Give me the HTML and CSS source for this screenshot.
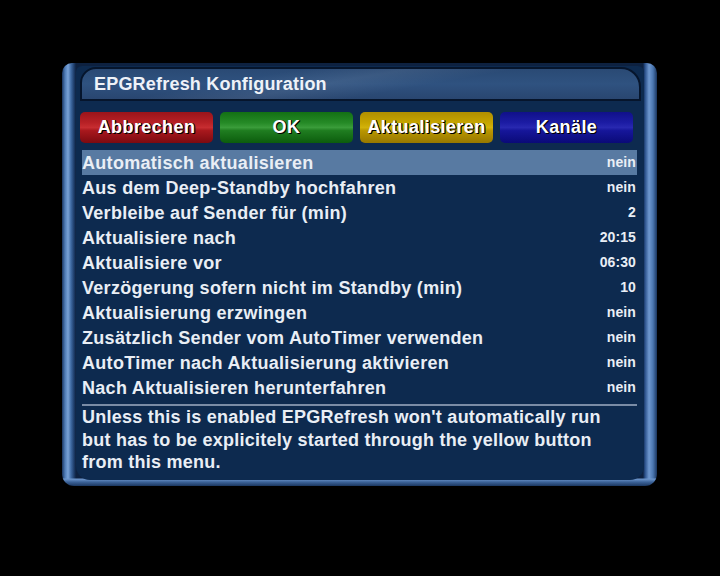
FILE: index.html
```html
<!DOCTYPE html>
<html lang="de">
<head>
<meta charset="utf-8">
<title>EPGRefresh Konfiguration</title>
<link rel="stylesheet" href="styles.css">
</head>
<body>
<div class="frame">
  <div class="panel">
    <div class="titlebar">EPGRefresh Konfiguration</div>
    <div class="buttons">
      <div class="btn btn-red">Abbrechen</div>
      <div class="btn btn-green">OK</div>
      <div class="btn btn-yellow">Aktualisieren</div>
      <div class="btn btn-blue">Kanäle</div>
    </div>
    <div class="list">
      <div class="row selected"><span class="label">Automatisch aktualisieren</span><span class="value">nein</span></div>
      <div class="row"><span class="label">Aus dem Deep-Standby hochfahren</span><span class="value">nein</span></div>
      <div class="row"><span class="label">Verbleibe auf Sender für (min)</span><span class="value">2</span></div>
      <div class="row"><span class="label">Aktualisiere nach</span><span class="value">20:15</span></div>
      <div class="row"><span class="label">Aktualisiere vor</span><span class="value">06:30</span></div>
      <div class="row"><span class="label">Verzögerung sofern nicht im Standby (min)</span><span class="value">10</span></div>
      <div class="row"><span class="label">Aktualisierung erzwingen</span><span class="value">nein</span></div>
      <div class="row"><span class="label">Zusätzlich Sender vom AutoTimer verwenden</span><span class="value">nein</span></div>
      <div class="row"><span class="label">AutoTimer nach Aktualisierung aktivieren</span><span class="value">nein</span></div>
      <div class="row"><span class="label">Nach Aktualisieren herunterfahren</span><span class="value">nein</span></div>
    </div>
    <div class="separator"></div>
    <div class="description">Unless this is enabled EPGRefresh won't automatically run but has to be explicitely started through the yellow button from this menu.</div>
  </div>
</div>
</body>
</html>
```
FILE: styles.css
```css
html, body {
  margin: 0;
  padding: 0;
  background: #000;
  width: 720px;
  height: 576px;
  overflow: hidden;
  font-family: "Liberation Sans", Arial, sans-serif;
  font-weight: bold;
  color: #e9eef5;
}

.frame {
  margin: 63px 0 0 62px;
  width: 595px;
  height: 423px;
  box-sizing: border-box;
  padding: 3px 13px 6px 14px;
  border-radius: 10px 10px 12px 12px;
  background:
    linear-gradient(180deg, rgba(0,0,0,0) 0, rgba(0,0,0,0) 415px, #6d96cc 416px, #3c6399 419px, #1b3760 423px),
    linear-gradient(90deg, #1a3560 0, #4e7bb6 3px, #7aa3d8 6px, #3f6aa3 9px, #1e3d6a 12px, #0d2140 14px, #0d2140 581px, #2a508a 583px, #6f98cf 587px, #4a76b0 591px, #1a355e 595px);
}

.panel {
  height: 100%;
  box-sizing: border-box;
  background: #0d2a4f;
  border-radius: 6px 6px 14px 14px;
  display: flex;
  flex-direction: column;
  padding: 1px 3px 0 4px;
}

.titlebar {
  height: 34px;
  box-sizing: border-box;
  border: 2px solid #06152c;
  border-radius: 16px 20px 0 0;
  background:
    linear-gradient(170deg, rgba(255,255,255,0) 30%, rgba(255,255,255,0.07) 45%, rgba(255,255,255,0) 60%),
    linear-gradient(180deg, #2a4a74 0, #2f5280 50%, #294670 100%);
  font-size: 18px;
  letter-spacing: 0.2px;
  line-height: 30px;
  padding-left: 12px;
  color: #eef2f8;
}

.buttons {
  display: flex;
  gap: 7px;
  margin-top: 11px;
}

.btn {
  width: 133px;
  height: 31px;
  border-radius: 5px;
  font-size: 18px;
  letter-spacing: 0.4px;
  line-height: 31px;
  text-align: center;
  color: #fff;
  text-shadow: 1px 1px 0 #000, 1px 0 0 #000;
}

.btn-red {
  background: linear-gradient(180deg, #9a141a 0, #b82126 35%, #c72d31 50%, #a8181d 60%, #7c0a10 100%);
}
.btn-green {
  background: linear-gradient(180deg, #137014 0, #258a26 35%, #3a9c3a 50%, #1f7d20 60%, #0c5c0d 100%);
}
.btn-yellow {
  background: linear-gradient(180deg, #b08f00 0, #c6a500 35%, #d2b20a 50%, #b99600 60%, #967700 100%);
}
.btn-blue {
  background: linear-gradient(180deg, #10108a 0, #1c1ca4 35%, #2828b0 50%, #16169a 60%, #0a0a78 100%);
}

.list {
  margin: 7px 4px 0 2px;
  display: flex;
  flex-direction: column;
}

.row {
  height: 25px;
  display: flex;
  justify-content: space-between;
  align-items: center;
}

.row.selected {
  background: #587aa2;
}

.label {
  font-size: 18px;
  letter-spacing: 0.3px;
  margin-top: 1px;
}

.value {
  font-size: 14px;
  letter-spacing: 0.1px;
  margin-top: -2px;
  margin-right: 1px;
}

.separator {
  margin: 4px 4px 0 2px;
  height: 2px;
  background: #7a8ca6;
}

.description {
  margin: 0 12px 0 2px;
  font-size: 18px;
  letter-spacing: 0.25px;
  line-height: 22.5px;
}
```
